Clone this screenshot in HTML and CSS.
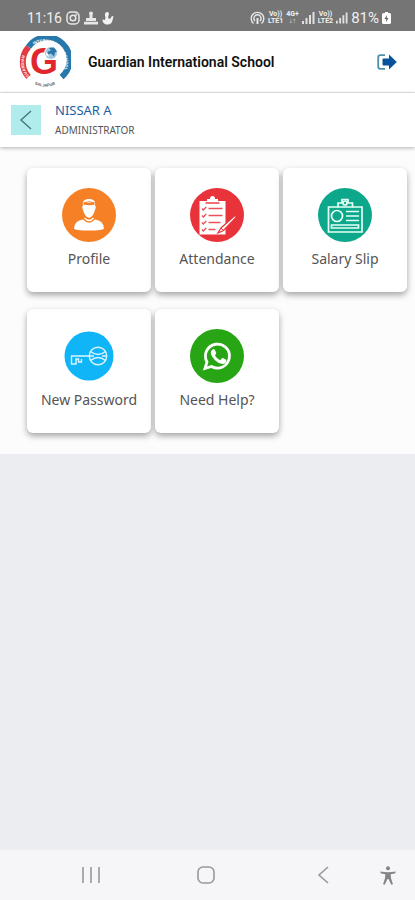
FILE: index.html
```html
<!DOCTYPE html>
<html lang="en">
<head>
  <meta charset="UTF-8" />
  <meta name="viewport" content="width=device-width, initial-scale=1" />
  <title>Guardian International School</title>
  <link rel="stylesheet" href="styles.css">
</head>
<body>
  <div class="status-bar">
    <div class="status-left">
      <span class="clock">11:16</span>
      <svg width="14" height="14" viewBox="0 0 14 14" fill="none" stroke="#e8e8e8" stroke-width="1.5">
        <rect x="1" y="1" width="12" height="12" rx="4" />
        <circle cx="7" cy="7" r="2.8" />
        <circle cx="10.3" cy="3.7" r=".4" />
      </svg>
      <svg width="14" height="14" viewBox="0 0 14 14" fill="#e8e8e8">
        <circle cx="7" cy="2.4" r="2" />
        <path d="M5.500 4h3v3H12v3H2V7h3.500zM0 10.800h14v2.700H0z" />
      </svg>
      <svg width="12" height="14" viewBox="0 0 12 14" fill="#f2f2f2">
        <path d="M5 1c2 0 2.500 2 1.500 3.500L6 7l2 1 2-3 1.500.5L10 11c-1 2-3 2.500-5 2.500C2 13.500.5 11 .5 8.500L3 9l.5-3C2.500 4 3 1 5 1z" />
      </svg>
    </div>
    <div class="status-right">
      <svg width="15" height="14" viewBox="0 0 15 14" fill="none" stroke="#e8e8e8" stroke-width="1.400">
        <path d="M3.500 12.500a6.300 6.300 0 1 1 8 0M5 10a3.600 3.600 0 1 1 5 0" />
        <path d="M7.500 7v6" stroke-width="2" />
      </svg>
      <span class="network">Vo))<br>LTE1</span>
      <span class="network">4G+<br>↓↑</span>
      <svg class="signal" width="13" height="12" viewBox="0 0 13 12" fill="#e0e0e0">
        <path d="M0 9h2v3H0zM3.500 6h2v6h-2zM7 3h2v9H7zM10.500 0h2v12h-2z" />
      </svg>
      <span class="network">Vo))<br>LTE2</span>
      <svg class="signal" width="12" height="12" viewBox="0 0 13 12" fill="#e0e0e0">
        <path d="M0 9h2v3H0zM3.500 6h2v6h-2zM7 3h2v9H7zM10.500 0h2v12h-2z" />
      </svg>
      <span class="battery">81%</span>
      <svg width="9" height="12" viewBox="0 0 9 12">
        <path d="M3 0h3v1h1.500q1.500 0 1.500 1.500v8q0 1.500-1.500 1.500h-6Q0 12 0 10.500v-8Q0 1 1.500 1H3z" fill="#fff" />
        <path d="M5 3L2.500 7h1.700L4 10l2.500-4H4.800z" fill="#666" />
      </svg>
    </div>
  </div>

  <header class="top-bar">
    <svg class="logo" width="52" height="52" viewBox="0 0 52 52" role="img" aria-label="School logo">
      <defs>
        <path id="ring-left" d="M11.500 41.500A21 21 0 0 1 12 10.500" />
        <path id="ring-right" d="M10 12.500A21 21 0 1 1 40.500 41.500" />
        <path id="ring-bottom" d="M8 43A25 25 0 0 0 44 43" />
      </defs>
      <path d="M9.500 41A22.500 22.500 0 0 1 9.500 11" fill="none" stroke="#e33a41" stroke-width="6" />
      <path d="M9.500 11A22.500 22.500 0 1 1 42.500 41" fill="none" stroke="#2879ab" stroke-width="6" />
      <text class="ring-text"><textPath href="#ring-left" startOffset="2">GUARDIAN</textPath></text>
      <text class="ring-text"><textPath href="#ring-right" startOffset="6">INTERNATIONAL SCHOOL</textPath></text>
      <text class="ring-town"><textPath href="#ring-bottom" startOffset="50%">SALJAPUR</textPath></text>
      <text class="logo-letter" x="25" y="38">G</text>
      <circle cx="32" cy="17" r="7" fill="#fff" />
      <circle cx="32" cy="17" r="6" fill="#9fc9df" />
      <path d="M30 12l5-.5 3 4-2 1-1 4-3-3-4 1 1-3 3-1z" fill="#2c77a8" />
      <path d="M27 16l2 2 1 3-3-2z" fill="#fff" />
    </svg>
    <h1>Guardian International School</h1>
    <button class="logout" aria-label="Log out">
      <svg width="20" height="16" viewBox="0 0 20 16">
        <path d="M8 1.200H3.500Q1.200 1.200 1.200 3.500v9q0 2.300 2.300 2.300H8" fill="none" stroke="#4d91a9" stroke-width="1.800" />
        <path d="M6.500 4.500H12V.5L19.800 8 12 15.500v-4H6.500Q5.500 11.500 5.500 10.500v-5q0-1 1-1z" fill="#07529a" />
      </svg>
    </button>
  </header>

  <section class="user-bar">
    <button class="back" aria-label="Back">
      <svg width="14" height="20" viewBox="0 0 14 20" fill="none" stroke="#49757b" stroke-width="1.400">
        <path d="M12 1L2 10l10 9" />
      </svg>
    </button>
    <div>
      <h2>NISSAR A</h2>
      <p>ADMINISTRATOR</p>
    </div>
  </section>

  <main class="menu">
    <a class="card" href="#profile">
      <svg viewBox="0 0 54 54">
        <circle cx="27" cy="27" r="27" fill="#f58026" />
        <g fill="#fff">
          <path d="M21 17c-1-4 2-6 6-6s7 2 6 6l-1-2.500q-5 1-10 0z" />
          <path d="M21 16.500q6 1.500 12 0l.8 3-1.300 4q-1.500 5-5.500 6.500-4-1.500-5.500-6.500l-1.300-4z" />
          <path d="M21 31.500q6 6.500 12 0 8.500 1 9 9-1 2-15 2t-15-2q.5-8 9-9z" />
        </g>
        <path d="M22.500 30q4.500 5 9 0" stroke="#fff" stroke-width="1.300" fill="none" />
        <path d="M21.500 14.800q5.500-2 11 0" stroke="#f58026" stroke-width="1" fill="none" />
      </svg>
      <span>Profile</span>
    </a>
    <a class="card" href="#attendance">
      <svg viewBox="0 0 54 54">
        <circle cx="27" cy="27" r="27" fill="#e9333a" />
        <path d="M9.500 13H17v-2h3q0-3 2.500-3t2.500 3h3v2h7.500v33.500h-26z" fill="#fff" />
        <path d="M15.500 15h14" stroke="#e9333a" stroke-width="1.400" />
        <g fill="none" stroke="#e9515a" stroke-width="1.300">
          <path d="M12 20.500l1.300 1.500 3-3M12 27.500l1.300 1.500 3-3M12 34.500l1.300 1.500 3-3M12 41.500l1.300 1.500 3-3" />
          <path d="M18.500 20.500h14M18.500 27.500h14M18.500 34.500h12M18.500 41.500h7" />
        </g>
        <path d="M45.500 27L31 40l-3 5 5.500-2.500L46 29.500z" fill="#fff" stroke="#e9333a" stroke-width="1.200" />
        <path d="M31 40l2.500 2.500" stroke="#e9333a" />
      </svg>
      <span>Attendance</span>
    </a>
    <a class="card" href="#salary">
      <svg viewBox="0 0 54 54">
        <circle cx="27" cy="27" r="27" fill="#0da88b" />
        <g fill="none" stroke="#e6fff5" stroke-width="1.700">
          <path d="M20 19H10.500v25h33.500V19H34.500" />
          <path d="M20 19v-4h4v-3.500h6V15h4.500v4z" />
          <circle cx="27" cy="15" r="2" />
          <circle cx="19" cy="28" r="5.500" />
          <path d="M28 23.500h13M28 28h13M28 32.500h13M13.500 37h27v3h-27z" />
        </g>
      </svg>
      <span>Salary Slip</span>
    </a>
    <a class="card" href="#password">
      <svg viewBox="0 0 54 54">
        <circle cx="27" cy="27" r="24.500" fill="#0fb5f7" />
        <g fill="none" stroke="#dcf6ff" stroke-width="1.400">
          <circle cx="36" cy="27" r="8.700" />
          <path d="M28.500 22.500q7.500 6 15 0M28.500 31.500q7.500-6 15 0M28 27h4M40 27h4" />
          <path d="M27.500 27H9.500v8h4.500v-5h2.500v3h3v-3" />
        </g>
      </svg>
      <span>New Password</span>
    </a>
    <a class="card" href="#help">
      <svg viewBox="0 0 54 54">
        <circle cx="27" cy="27" r="27" fill="#27a514" />
        <path d="M15 39.500l2-6.500a12 12 0 1 1 4.500 4.500z" fill="none" stroke="#fff" stroke-width="2.800" />
        <path d="M22.500 20.500q1-1 2.200 0l1.500 3.300q.2 1-1.300 2.500 1.800 3.600 5.200 4.900l1.900-2q.8-.5 1.500 0l3 1.800q.2 3.300-3.500 4-3.700.3-7.700-3.500-4.300-4.500-4.500-7.500 0-2.200 1.700-3.500z" fill="#fff" />
      </svg>
      <span>Need Help?</span>
    </a>
  </main>

  <nav class="system-nav">
    <button aria-label="Recent apps">
      <svg width="18" height="18" viewBox="0 0 18 18" stroke="#999" stroke-width="1.600">
        <path d="M1 1v16M9 1v16M17 1v16" />
      </svg>
    </button>
    <button aria-label="Home">
      <svg width="18" height="18" viewBox="0 0 18 18" fill="none" stroke="#999" stroke-width="1.600">
        <rect x="1" y="1" width="16" height="16" rx="5" />
      </svg>
    </button>
    <button aria-label="Back">
      <svg width="18" height="18" viewBox="0 0 18 18" fill="none" stroke="#999" stroke-width="1.600">
        <path d="M15 1L6 9l9 8" />
      </svg>
    </button>
    <button class="accessibility" aria-label="Accessibility">
      <svg width="16" height="19" viewBox="0 0 16 19" fill="#858585">
        <circle cx="8" cy="2.200" r="2" />
        <path d="M.5 5.500q7.500 1.500 15 0v1.800l-4.800.9.3 4 2 6-1.700.6L8.500 13h-1l-2.800 5.800L3 18.200l2-6 .3-4-4.800-.9z" />
      </svg>
    </button>
  </nav>
</body>
</html>
```
FILE: styles.css
```css
* {
  box-sizing: border-box;
}

body {
  display: flex;
  flex-direction: column;
  min-height: 100vh;
  margin: 0;
  font-family: "Noto Sans", "Open Sans", sans-serif;
  background: #ebedf0;
}

h1, h2, p {
  margin: 0;
}

button {
  display: flex;
  align-items: center;
  justify-content: center;
  padding: 0;
  border: none;
  background: none;
  cursor: pointer;
}

.status-bar {
  display: flex;
  align-items: center;
  justify-content: space-between;
  height: 31px;
  padding: 4px 24px 0 27px;
  background: #757575;
  color: #f0f0f0;
  font-family: Roboto, sans-serif;
}

.status-left,
.status-right {
  display: flex;
  align-items: center;
}

.status-left {
  gap: 4px;
}

.status-right {
  gap: 3px;
}

.clock,
.battery {
  font-size: 14px;
}

.battery {
  font-size: 15px;
}

.network {
  font-size: 7px;
  font-weight: bold;
  line-height: 7px;
  text-align: center;
}

.top-bar {
  display: flex;
  align-items: center;
  height: 62px;
  padding: 0 18px 0 19px;
  background: #fff;
  border-bottom: 1px solid #e9e9e9;
}

.top-bar h1 {
  flex: 1;
  margin-left: 17px;
  font-family: Roboto, sans-serif;
  font-size: 14px;
  font-weight: 600;
  color: #111;
}

.ring-text {
  font: bold 4px "Liberation Sans", sans-serif;
  fill: #fff;
}

.ring-town {
  font: bold 4px "Liberation Sans", sans-serif;
  fill: #555;
  text-anchor: middle;
}

.logo-letter {
  font: bold 36px "Liberation Sans", sans-serif;
  fill: #e1262d;
  text-anchor: middle;
}

.user-bar {
  position: relative;
  display: flex;
  align-items: center;
  gap: 14px;
  height: 54px;
  padding: 0 11px;
  background: #fff;
  box-shadow: 0 1px 4px rgba(0, 0, 0, 0.3);
}

.back {
  width: 30px;
  height: 30px;
  background: #b0ecec;
}

.user-bar h2 {
  font-size: 13px;
  font-weight: 400;
  line-height: 20px;
  color: #1b629f;
}

.user-bar p {
  font-size: 10px;
  line-height: 20px;
  color: #555;
}

.menu {
  display: grid;
  grid-template-columns: repeat(3, 1fr);
  gap: 17px 4px;
  padding: 21px 8px 21px 27px;
  background: #fcfcfc;
}

.card {
  display: flex;
  flex-direction: column;
  align-items: center;
  gap: 7px;
  padding: 20px 0 23px;
  background: #fff;
  border-radius: 6px;
  box-shadow: 0 3px 6px rgba(0, 0, 0, 0.35);
  color: #555;
  font-size: 14px;
  line-height: 20px;
  text-decoration: none;
}

.card svg {
  width: 54px;
  height: 54px;
}

.system-nav {
  display: grid;
  grid-template-columns: repeat(3, 1fr) 16px;
  align-items: center;
  height: 50px;
  margin-top: auto;
  padding: 0 19px 0 33px;
  background: #f6f6f9;
}
```
